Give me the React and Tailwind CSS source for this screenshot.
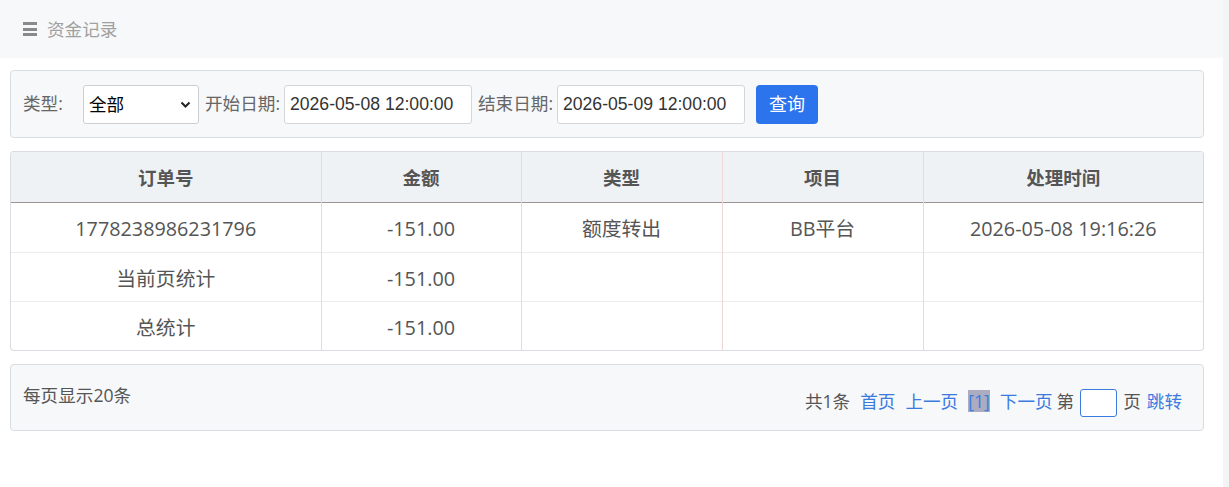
import React, { useState } from 'react';

const rows = [
    { order: '1778238986231796', amount: '-151.00', type: '额度转出', item: 'BB平台', time: '2026-05-08 19:16:26', h: 'h-[50px]' },
    { order: '当前页统计', amount: '-151.00', type: '', item: '', time: '', h: 'h-[49px]' },
    { order: '总统计', amount: '-151.00', type: '', item: '', time: '', h: 'h-[49px]' },
];

const FONT = { fontFamily: '"Open Sans", "Noto Sans CJK SC", sans-serif' };

const App = () => {
    const [type, setType] = useState('全部');
    const [start, setStart] = useState('2026-05-08 12:00:00');
    const [end, setEnd] = useState('2026-05-09 12:00:00');
    const [page, setPage] = useState('');

    return (
        <div className="flex w-full h-[487px] bg-white overflow-hidden" style={FONT}>
            <div className="flex-1 flex flex-col">
                {/* Top bar */}
                <div className="h-[58px] bg-[#f7f8fa] flex items-center pl-[23px]">
                    <div className="w-[14px] h-[14px] flex flex-col justify-between">
                        <span className="block h-[3px] bg-[#8a8a8a]"></span>
                        <span className="block h-[3px] bg-[#8a8a8a]"></span>
                        <span className="block h-[3px] bg-[#8a8a8a]"></span>
                    </div>
                    <span className="ml-[10px] pt-[2px] text-[17.6px] leading-none text-[#a0a0a0]">资金记录</span>
                </div>

                <div className="pl-[10px] pr-[19px] pt-[12px]">
                    {/* Filter bar */}
                    <div className="h-[68px] bg-[#f7f8fa] border border-[#d9dce0] rounded-[4px] flex items-center pl-[12px] text-[17.6px] text-[#666]">
                        <span className="w-[60px] leading-none">类型:</span>
                        <div className="relative w-[116px] h-[39px]">
                            <select
                                value={type}
                                onChange={(e) => setType(e.target.value)}
                                className="appearance-none w-full h-full bg-white border border-[#cfcfcf] rounded-[3px] pl-[5px] text-[17.6px] text-black outline-none"
                            >
                                <option>全部</option>
                                <option>额度转入</option>
                                <option>额度转出</option>
                            </select>
                            <svg className="absolute right-[8px] top-[16px] pointer-events-none" width="11" height="8" viewBox="0 0 11 8">
                                <path d="M1.5 1.5 L5.5 5.5 L9.5 1.5" fill="none" stroke="#222" strokeWidth="2" />
                            </svg>
                        </div>
                        <span className="ml-[6px] mr-[4px] leading-none">开始日期:</span>
                        <input
                            value={start}
                            onChange={(e) => setStart(e.target.value)}
                            className="w-[188px] h-[39px] bg-white border border-[#d6d6d6] rounded-[3px] pl-[5px] text-[17.6px] text-[#333] outline-none"
                            style={{ fontFamily: '"Liberation Sans", sans-serif' }}
                        />
                        <span className="ml-[6px] mr-[4px] leading-none">结束日期:</span>
                        <input
                            value={end}
                            onChange={(e) => setEnd(e.target.value)}
                            className="w-[188px] h-[39px] bg-white border border-[#d6d6d6] rounded-[3px] pl-[5px] text-[17.6px] text-[#333] outline-none"
                            style={{ fontFamily: '"Liberation Sans", sans-serif' }}
                        />
                        <button className="ml-[11px] w-[62px] h-[39px] bg-[#2b74ee] hover:bg-[#1f63d6] rounded-[4px] text-white text-[18px] leading-none">
                            查询
                        </button>
                    </div>

                    {/* Records table */}
                    <div className="mt-[13px] border-y border-l border-y-[#d9dce0] border-l-[#d9dce0] border-r border-r-[#f0cfcf] rounded-[4px] overflow-hidden">
                        <table className="w-full border-collapse table-fixed">
                            <colgroup>
                                <col className="w-[310px]" />
                                <col className="w-[200px]" />
                                <col className="w-[201px]" />
                                <col className="w-[201px]" />
                                <col />
                            </colgroup>
                            <thead>
                                <tr className="h-[50px] bg-[#eff2f5] border-b border-[#9e9393]">
                                    {['订单号', '金额', '类型', '项目', '处理时间'].map((h, i) => (
                                        <th key={h} className={`pt-[2px] text-[18.5px] font-bold text-[#555] ${i < 4 ? 'border-r border-[#efd7d7]' : ''}`}>
                                            {h}
                                        </th>
                                    ))}
                                </tr>
                            </thead>
                            <tbody>
                                {rows.map((r, idx) => (
                                    <tr key={idx} className={`${r.h} ${idx < rows.length - 1 ? 'border-b border-[#ececec]' : ''}`}>
                                        {[r.order, r.amount, r.type, r.item, r.time].map((v, i) => (
                                            <td key={i} className={`pt-[4px] text-center text-[19.8px] text-[#555] ${i < 4 ? 'border-r border-[#efd7d7]' : ''}`}>
                                                {v}
                                            </td>
                                        ))}
                                    </tr>
                                ))}
                            </tbody>
                        </table>
                    </div>

                    {/* Pager */}
                    <div className="mt-[13px] h-[67px] bg-[#f7f8fa] border border-[#d9dce0] rounded-[4px] flex justify-between pl-[12px] pr-[21px] text-[17.6px]">
                        <span className="pt-[19px] leading-[22px] text-[#555]">每页显示20条</span>
                        <div className="pt-[25px] flex items-start leading-[22px]">
                            <span className="text-[#555]">共1条</span>
                            <a href="#" className="ml-[10px] text-[#3b7be0]">首页</a>
                            <a href="#" className="ml-[10px] text-[#3b7be0]">上一页</a>
                            <span className="ml-[10px] bg-[#abacc0] text-[#3b7be0]">[1]</span>
                            <a href="#" className="ml-[10px] text-[#3b7be0]">下一页</a>
                            <span className="ml-[4px] text-[#555]">第</span>
                            <input
                                value={page}
                                onChange={(e) => setPage(e.target.value)}
                                className="ml-[6px] -mt-[1px] w-[37px] h-[28px] bg-white border border-[#3b7be0] rounded-[3px] outline-none text-[15px] text-center"
                            />
                            <span className="ml-[6px] text-[#555]">页</span>
                            <a href="#" className="ml-[6px] text-[#3b7be0]">跳转</a>
                        </div>
                    </div>
                </div>
            </div>
            <div className="w-[6px] bg-[#f3f4f6]"></div>
        </div>
    );
};

export default App;
